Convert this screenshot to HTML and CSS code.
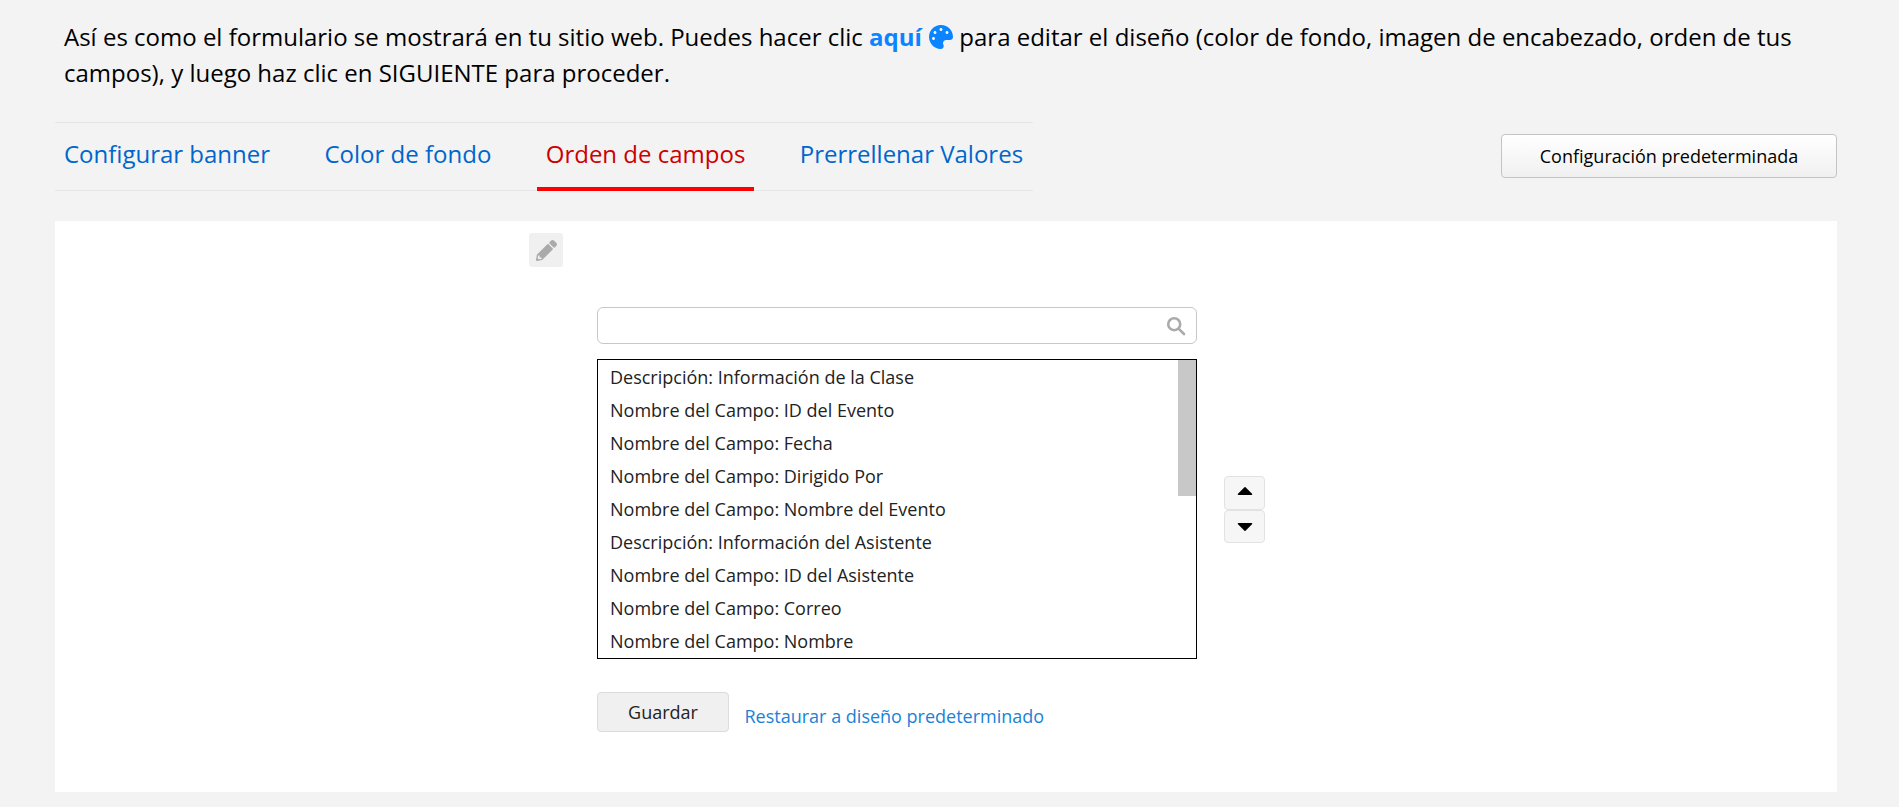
FILE: index.html
```html
<!DOCTYPE html>
<html lang="es">
<head>
<meta charset="utf-8">
<title>Diseño del formulario</title>
<link rel="stylesheet" href="styles.css">
</head>
<body>
<main class="page">
  <p class="intro">Así es como el formulario se mostrará en tu sitio web. Puedes hacer clic <a class="here" href="#">aquí <svg class="palette" viewBox="0 0 512 512"><path d="M204.3 5C104.9 24.4 24.8 104.3 5.2 203.4c-37 187 131.7 326.4 258.8 306.7 41.2-6.4 61.4-54.6 42.5-91.7-23.1-45.4 9.9-98.4 60.9-98.4h79.7c35.8 0 64.8-29.6 64.9-65.3C511.5 97.1 368.1-26.9 204.3 5zM96 320c-17.7 0-32-14.3-32-32s14.3-32 32-32 32 14.3 32 32-14.3 32-32 32zm32-128c-17.7 0-32-14.3-32-32s14.3-32 32-32 32 14.3 32 32-14.3 32-32 32zm128-64c-17.7 0-32-14.3-32-32s14.3-32 32-32 32 14.3 32 32-14.3 32-32 32zm128 64c-17.7 0-32-14.3-32-32s14.3-32 32-32 32 14.3 32 32-14.3 32-32 32z"/></svg></a> para editar el diseño (color de fondo, imagen de encabezado, orden de tus campos), y luego haz clic en SIGUIENTE para proceder.</p>

  <div class="toolbar">
    <nav class="tabs">
      <a class="tab" href="#">Configurar banner</a>
      <a class="tab" href="#">Color de fondo</a>
      <a class="tab active" href="#">Orden de campos</a>
      <a class="tab" href="#">Prerrellenar Valores</a>
    </nav>
    <button class="default-btn" type="button">Configuración predeterminada</button>
  </div>

  <section class="panel">
    <div class="pencil-row">
      <span class="pencil"><svg viewBox="0 0 512 512"><path d="M497.9 142.1l-46.1 46.1c-4.7 4.7-12.3 4.7-17 0l-111-111c-4.7-4.7-4.7-12.3 0-17l46.1-46.1c18.7-18.7 49.1-18.7 67.9 0l60.1 60.1c18.8 18.7 18.8 49.1 0 67.9zM284.2 99.8L21.6 362.4.4 483.9c-2.9 16.4 11.4 30.6 27.8 27.8l121.5-21.3 262.6-262.6c4.7-4.7 4.7-12.3 0-17l-111-111c-4.8-4.7-12.4-4.7-17.1 0zM88 424h48v36.3l-64.5 11.3-31.1-31.1L51.7 376H88v48z"/></svg></span>
    </div>

    <div class="editor">
      <div class="search">
        <svg class="search-icon" viewBox="0 0 20 20"><circle cx="8.2" cy="8.2" r="6"/><path d="M12.8 12.8 18 18"/></svg>
      </div>
      <div class="list-row">
        <div class="list">
          <ul class="items">
            <li>Descripción: Información de la Clase</li>
            <li>Nombre del Campo: ID del Evento</li>
            <li>Nombre del Campo: Fecha</li>
            <li>Nombre del Campo: Dirigido Por</li>
            <li>Nombre del Campo: Nombre del Evento</li>
            <li>Descripción: Información del Asistente</li>
            <li>Nombre del Campo: ID del Asistente</li>
            <li>Nombre del Campo: Correo</li>
            <li>Nombre del Campo: Nombre</li>
          </ul>
          <span class="thumb"></span>
        </div>
        <div class="movers">
          <button class="mover mover-up" type="button" aria-label="Subir"><svg viewBox="0 0 16 10"><path d="M8 1.8 14.5 8.2H1.5Z"/></svg></button>
          <button class="mover mover-down" type="button" aria-label="Bajar"><svg viewBox="0 0 16 10"><path d="M1.5 1.8H14.5L8 8.2Z"/></svg></button>
        </div>
      </div>
      <div class="actions">
        <button class="save" type="button">Guardar</button>
        <a class="restore" href="#">Restaurar a diseño predeterminado</a>
      </div>
    </div>
  </section>
</main>
</body>
</html>
```
FILE: styles.css
```css
* { box-sizing: border-box; }

html, body { margin: 0; height: 100%; }

body {
  background: #f3f3f3;
  color: #000;
  font-family: "Open Sans", "Liberation Sans", sans-serif;
  overflow: hidden;
}

.page { padding: 19px 62px 0 55px; }

.intro {
  margin: 0;
  padding-left: 9px;
  font-size: 24px;
  line-height: 36px;
  color: #000;
}

.here {
  color: #0a84ff;
  font-weight: 700;
  text-decoration: none;
}

.palette {
  width: 24px;
  height: 24px;
  margin-left: 1px;
  vertical-align: -3px;
  fill: #0a84ff;
}

.toolbar {
  display: flex;
  justify-content: space-between;
  align-items: flex-start;
  margin-top: 31px;
}

.tabs {
  display: flex;
  width: 978px;
  height: 69px;
  gap: 36.4px;
  border-top: 1px solid #e6e6e6;
  border-bottom: 1px solid #e6e6e6;
}

.tab {
  height: 68px;
  padding: 0 9px;
  font-size: 24px;
  line-height: 62px;
  color: #0066cc;
  text-decoration: none;
}

.tab.active {
  color: #cc0000;
  border-bottom: 4px solid #f00;
}

.default-btn {
  width: 336px;
  height: 44px;
  margin-top: 12px;
  border: 1px solid #c4c4c4;
  border-radius: 4px;
  background: linear-gradient(#fff, #f0f0f0);
  font-family: inherit;
  font-size: 18px;
  color: #000;
}

.panel {
  height: 571px;
  margin-top: 30px;
  background: #fff;
}

.pencil-row { padding: 12px 0 0 474px; }

.pencil {
  display: flex;
  align-items: center;
  justify-content: center;
  width: 34px;
  height: 34px;
  border-radius: 3px;
  background: #f0f0f0;
}

.pencil svg {
  width: 21px;
  height: 21px;
  fill: #aaa;
}

.editor { padding: 40px 0 0 542px; }

.search {
  display: flex;
  align-items: center;
  justify-content: flex-end;
  width: 600px;
  height: 37px;
  padding-right: 10px;
  border: 1px solid #c8c8c8;
  border-radius: 6px;
  background: #fff;
}

.search-icon {
  width: 20px;
  height: 20px;
  fill: none;
  stroke: #aaa;
  stroke-width: 2.6;
  stroke-linecap: round;
}

.list-row {
  display: flex;
  align-items: flex-end;
  margin-top: 15px;
}

.list {
  position: relative;
  width: 600px;
  height: 300px;
  border: 1px solid #000;
  overflow: hidden;
}

.items {
  margin: 0;
  padding: 1px 0 0;
  list-style: none;
}

.items li {
  height: 33px;
  padding-left: 12px;
  font-size: 18px;
  line-height: 33px;
  color: #222;
}

.thumb {
  position: absolute;
  top: 0;
  right: 0;
  width: 18px;
  height: 136px;
  background: #c8c8c8;
}

.movers {
  display: flex;
  flex-direction: column;
  margin: 0 0 116px 27px;
}

.mover {
  display: flex;
  align-items: center;
  justify-content: center;
  width: 41px;
  height: 33.5px;
  padding: 0;
  border: 1px solid #e2e2e2;
  border-radius: 4px;
  background: #f6f6f6;
}

.mover-up { padding-bottom: 4px; }

.mover-down { padding-top: 1px; }

.mover svg {
  width: 16px;
  height: 10px;
  fill: #000;
  stroke: #000;
  stroke-width: 1.5;
  stroke-linejoin: round;
}

.actions {
  display: flex;
  align-items: flex-start;
  gap: 15.5px;
  margin-top: 33px;
}

.save {
  width: 132px;
  height: 40px;
  border: 1px solid #dcdcdc;
  border-radius: 4px;
  background: #f0f0f0;
  font-family: inherit;
  font-size: 18px;
  color: #222;
}

.restore {
  margin-top: 12px;
  font-size: 18px;
  line-height: 24px;
  color: #1a82d6;
  text-decoration: none;
}
```
